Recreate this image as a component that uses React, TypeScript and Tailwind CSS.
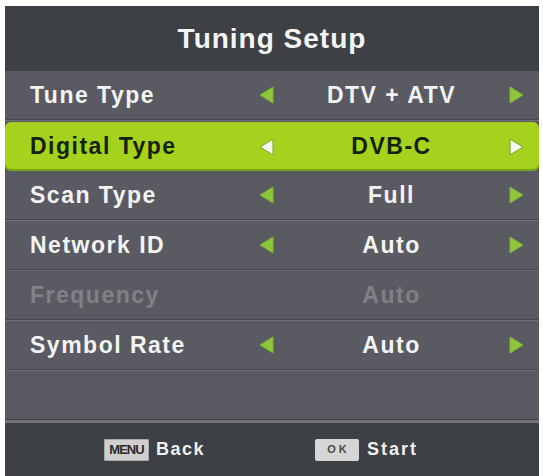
import React from "react";

type Row = {
  label: string;
  value?: string;
  active?: boolean;
  disabled?: boolean;
};

const rows: Row[] = [
  { label: "Tune Type", value: "DTV + ATV" },
  { label: "Digital Type", value: "DVB-C", active: true },
  { label: "Scan Type", value: "Full" },
  { label: "Network ID", value: "Auto" },
  { label: "Frequency", value: "Auto", disabled: true },
  { label: "Symbol Rate", value: "Auto" },
  { label: "" },
];

// little triangle arrows either side of the value
const Arrow = ({ dir, active }: { dir: "left" | "right"; active?: boolean }) => {
  const points = dir === "left" ? "14,1 14,17 1,9" : "1,1 1,17 14,9";
  return (
    <svg width="15" height="18" viewBox="0 0 15 18" className="shrink-0">
      <polygon
        points={points}
        fill={active ? "#f4f8ee" : "#8dc63c"}
        stroke={active ? "#78a41e" : "#7fb534"}
        strokeWidth="1"
        strokeLinejoin="round"
      />
    </svg>
  );
};

const MenuRow = ({ row }: { row: Row }) => {
  const textColor = row.active
    ? "text-[#15220a]"
    : row.disabled
      ? "text-[#7f8186]"
      : "text-[#f3f3f3]";

  return (
    <div className="h-[50px] flex flex-col">
      <div
        className={
          row.active
            ? "flex-1 flex items-center mt-[1px] rounded-[6px] bg-[#a5d21c] shadow-[inset_0_-2px_0_#7aa414]"
            : "flex-1 flex items-center"
        }
      >
        {row.label && (
          <>
            <div
              className={`w-[254px] pl-[25px] text-[23px] font-bold tracking-[1.5px] ${textColor}`}
            >
              {row.label}
            </div>
            <div className="w-[15px]">
              {!row.disabled && <Arrow dir="left" active={row.active} />}
            </div>
            <div
              className={`flex-1 text-center text-[23px] font-bold tracking-[1.5px] ${textColor}`}
            >
              {row.value}
            </div>
            <div className="w-[15px]">
              {!row.disabled && <Arrow dir="right" active={row.active} />}
            </div>
            <div className="w-[15px]" />
          </>
        )}
      </div>
      {!row.active && (
        <div className="h-[2px] border-t border-[#45474c] bg-[#6c6e73]" />
      )}
    </div>
  );
};

export default function App() {
  return (
    <div
      className="w-[543px] h-[476px] bg-white pt-[6px] pl-[5px] pr-[4px] overflow-hidden"
      style={{ fontFamily: '"Liberation Sans", Arial, sans-serif' }}
    >
      <div className="h-full flex flex-col bg-[#5a5b62]">
        {/* Title */}
        <div className="h-[65px] shrink-0 bg-[#3d4044] flex items-center justify-center">
          <span className="text-[28px] font-bold tracking-[1px] text-[#f5f5f5]">
            Tuning Setup
          </span>
        </div>

        {/* Options */}
        {rows.map((row, i) => (
          <MenuRow key={i} row={row} />
        ))}

        {/* Footer */}
        <div className="flex-1 bg-[#3d4044] border-t-2 border-[#74767b] flex items-center pl-[99px] gap-[110px]">
          <div className="flex items-center gap-[7px]">
            <span className="w-[45px] h-[22px] rounded-[2px] bg-[#cfcfcf] flex items-center justify-center text-[13px] font-bold tracking-[-1px] text-[#2b2b2b] shadow-[inset_0_0_0_1px_#a9a9a9]">
              MENU
            </span>
            <span className="text-[18px] font-bold tracking-[1.5px] text-[#f0f0f0]">
              Back
            </span>
          </div>
          <div className="flex items-center gap-[8px]">
            <span className="w-[44px] h-[22px] rounded-[2px] bg-[#d6d6d6] flex items-center justify-center text-[11px] font-bold tracking-[3px] text-[#4a4a4a] pl-[3px]">
              OK
            </span>
            <span className="text-[18px] font-bold tracking-[2px] text-[#f0f0f0]">
              Start
            </span>
          </div>
        </div>
      </div>
    </div>
  );
}
